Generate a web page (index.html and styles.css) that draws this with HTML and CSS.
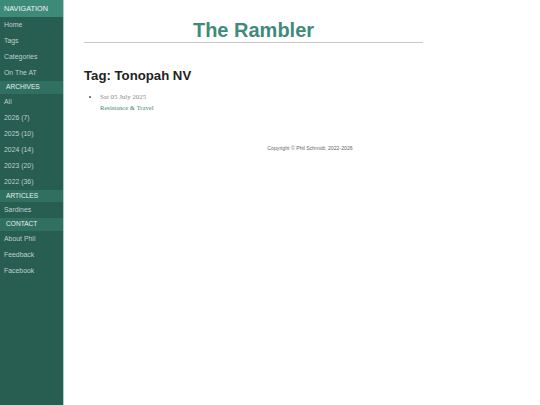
FILE: index.html
```html
<!DOCTYPE html>
<html lang="en">
<head>
<meta charset="utf-8">
<title>Tag: Tonopah NV - The Rambler</title>
<link rel="stylesheet" href="styles.css">
</head>
<body>
<div class="page">
  <nav class="sidebar">
    <div class="band band-main">NAVIGATION</div>
    <a class="item" href="#">Home</a>
    <a class="item" href="#">Tags</a>
    <a class="item" href="#">Categories</a>
    <a class="item" href="#">On The AT</a>
    <div class="band">ARCHIVES</div>
    <a class="item" href="#">All</a>
    <a class="item" href="#">2026 (7)</a>
    <a class="item" href="#">2025 (10)</a>
    <a class="item" href="#">2024 (14)</a>
    <a class="item" href="#">2023 (20)</a>
    <a class="item" href="#">2022 (36)</a>
    <div class="band">ARTICLES</div>
    <a class="item" href="#">Sardines</a>
    <div class="band">CONTACT</div>
    <a class="item" href="#">About Phil</a>
    <a class="item" href="#">Feedback</a>
    <a class="item" href="#">Facebook</a>
  </nav>
  <main class="main">
    <header class="header">
      <h1 class="title">The Rambler</h1>
    </header>
    <h2 class="heading">Tag: Tonopah NV</h2>
    <ul class="posts">
      <li class="post">
        <div class="date">Sat 05 July 2025</div>
        <a class="post-link" href="#">Resistance &amp; Travel</a>
      </li>
    </ul>
    <footer class="footer">Copyright © Phil Schmidt; 2022-2026</footer>
  </main>
</div>
</body>
</html>
```
FILE: styles.css
```css
html, body {
  margin: 0;
  padding: 0;
  height: 100%;
  background: #ffffff;
  font-family: "Liberation Sans", Arial, sans-serif;
}
.page {
  display: flex;
  min-height: 100%;
}
.sidebar {
  width: 63px;
  flex: none;
  background: #285d51;
  border-right: 1px solid #a9cfc8;
  display: flex;
  flex-direction: column;
}
.band {
  height: 12.5px;
  line-height: 12.5px;
  background: #307060;
  color: #e6efec;
  font-size: 6.6px;
  padding-left: 6px;
}
.band-main {
  height: 17px;
  line-height: 17px;
  background: #3e8a78;
  font-size: 7.3px;
  padding-left: 4px;
  color: #eef4f2;
}
.item {
  height: 16px;
  line-height: 16px;
  padding-left: 4px;
  font-size: 6.9px;
  color: #bdd1cb;
  text-decoration: none;
}
.main {
  flex: 1;
  padding: 0 4px 0 20px;
}
.header {
  width: 75%;
  border-bottom: 1px solid #c8c8c8;
  text-align: center;
  padding-top: 19px;
}
.title {
  margin: 0;
  font-size: 20px;
  line-height: 23px;
  font-weight: bold;
  color: #3f8a7b;
}
.heading {
  margin: 25px 0 0 0;
  font-size: 13.2px;
  line-height: 16px;
  font-weight: bold;
  color: #222222;
}
.posts {
  margin: 7px 0 0 0;
  padding-left: 16px;
  font-family: "Liberation Serif", "Times New Roman", serif;
  font-size: 6.6px;
}
.post {
  color: #555555;
}
.date {
  line-height: 11px;
  font-size: 6.9px;
  color: #888888;
}
.post-link {
  display: block;
  line-height: 11px;
  color: #3f8a7b;
  text-decoration: none;
}
.footer {
  margin-top: 32px;
  text-align: center;
  font-size: 5.2px;
  color: #666666;
}
```
